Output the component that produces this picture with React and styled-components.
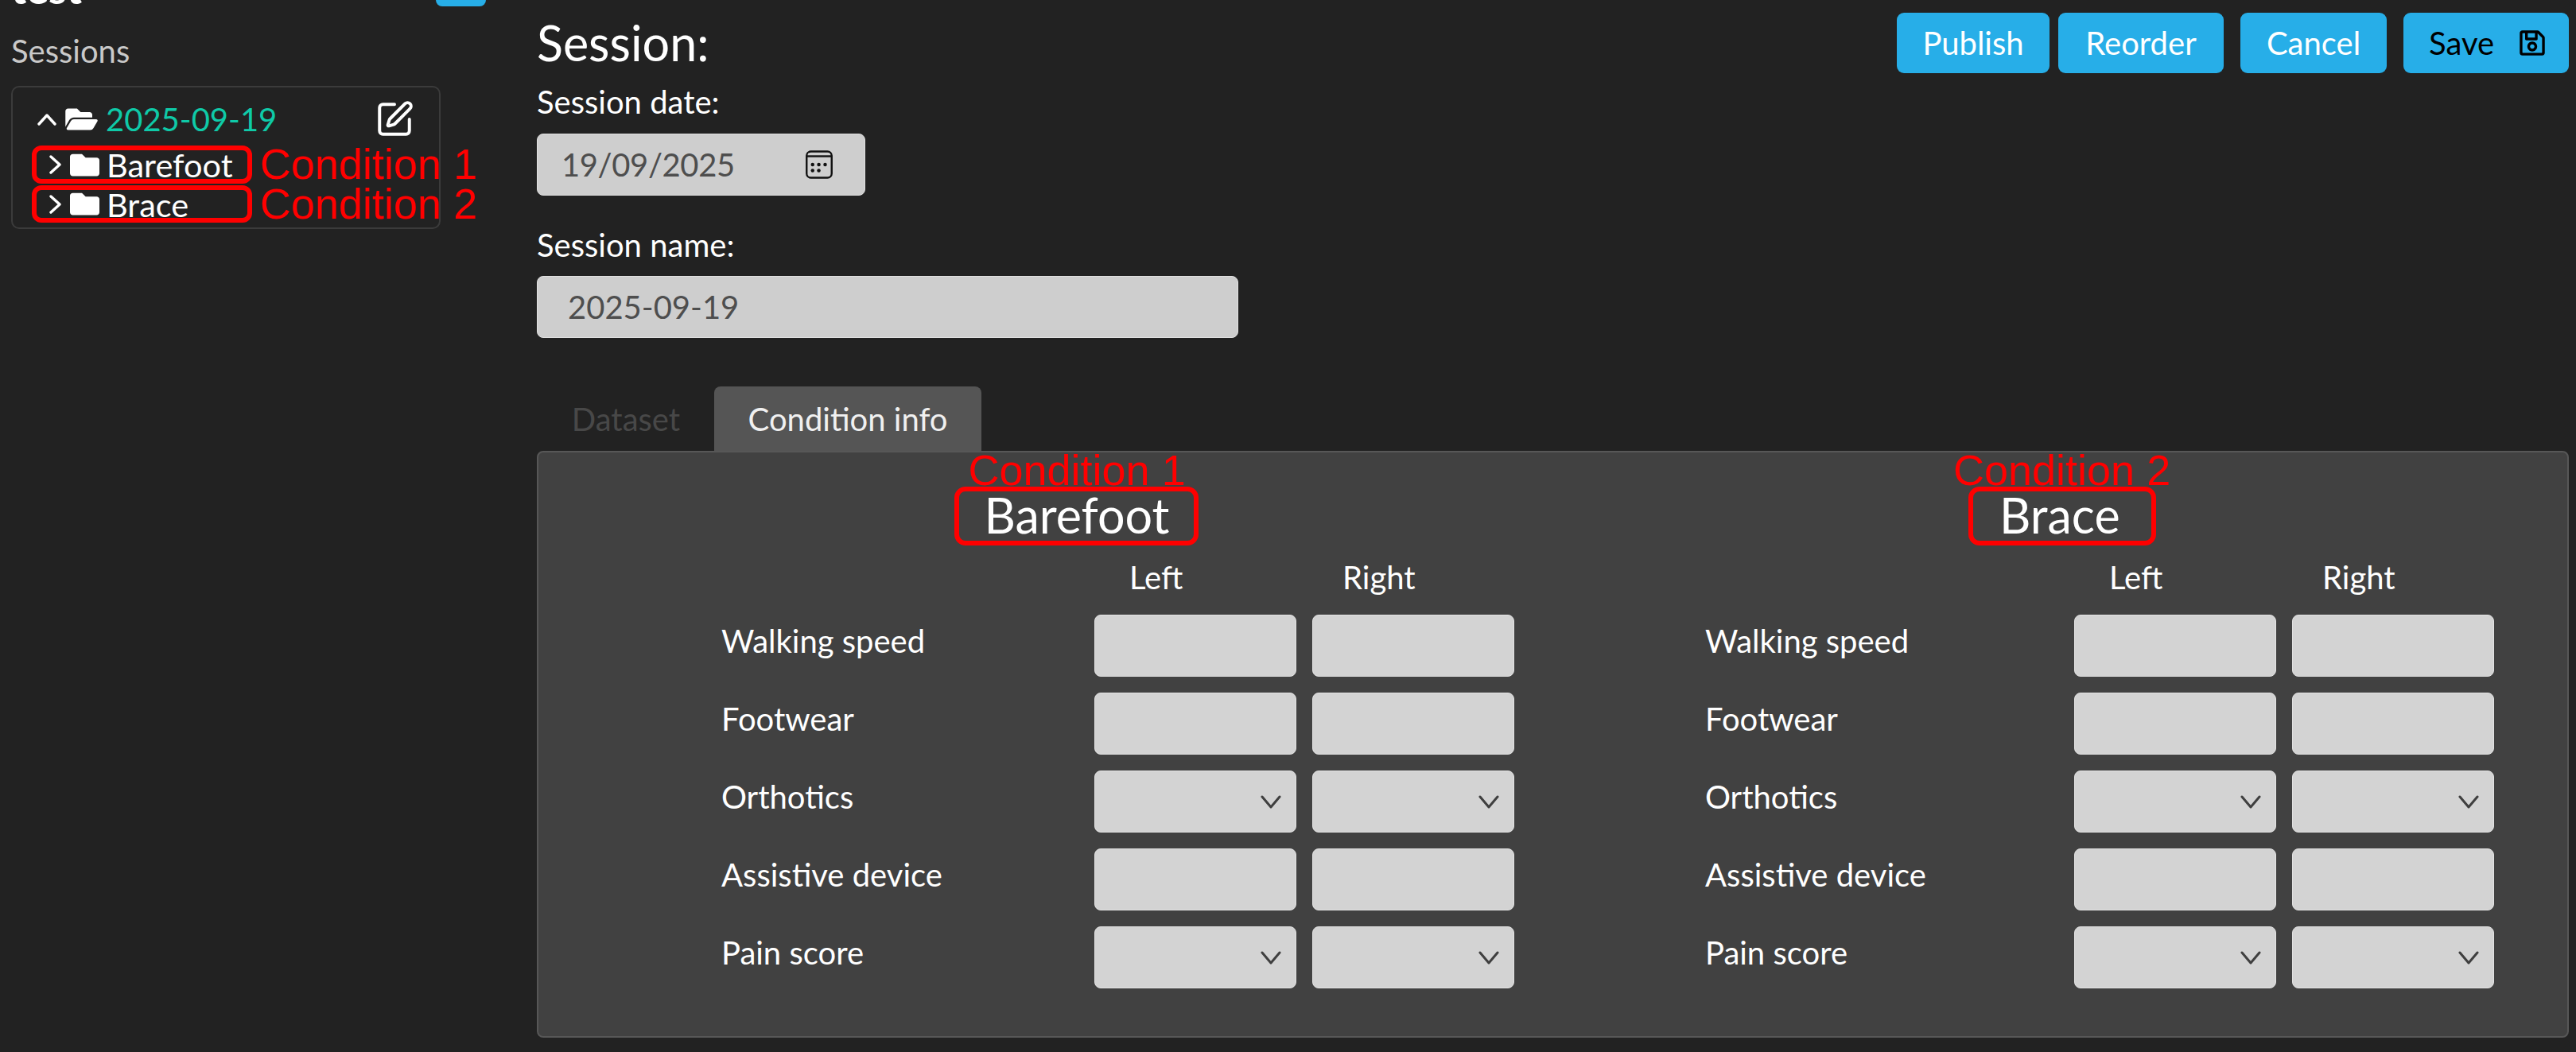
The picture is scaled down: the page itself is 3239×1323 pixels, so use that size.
import styled, { createGlobalStyle } from 'styled-components'
import { SquarePen } from 'lucide-react'
import { FaFolder, FaFolderOpen, FaRegSave } from 'react-icons/fa'

const GlobalStyle = createGlobalStyle`
html, body {
  margin: 0;
  padding: 0;
  height: 100%;
  background: #222222;
  overflow: hidden;
}
* { box-sizing: border-box; }
`

const Page = styled.div`
display: flex;
width: 3239px;
height: 1323px;
overflow: hidden;
background: #222222;
color: #ffffff;
font-family: Lato, "Open Sans", sans-serif;
font-size: 40px;
`

const Sidebar = styled.aside`
width: 675px;
flex-shrink: 0;
padding-left: 14px;
`

const SidebarTop = styled.div`
display: flex;
justify-content: space-between;
align-items: flex-end;
width: 597px;
height: 8px;
overflow: hidden;
`

const ProjectName = styled.div`
font-size: 52px;
font-weight: 700;
line-height: 40px;
height: 5px;
margin-bottom: 3px;
display: flex;
align-items: flex-end;
`

const SmallButton = styled.div`
width: 63px;
height: 40px;
background: #27aee8;
border-radius: 8px;
`

const SessionsTitle = styled.div`
margin-top: 32px;
line-height: 48px;
color: #c9c9c9;
`

const TreeBox = styled.div`
margin-top: 20px;
width: 540px;
height: 180px;
padding: 20px 0 0 24px;
border: 2px solid #3b3b3b;
border-radius: 10px;
`

const SessionRow = styled.div`
display: flex;
align-items: center;
height: 39px;
padding-left: 7px;
margin-bottom: 14px;
color: #0fcaa8;
svg { color: #ffffff; flex-shrink: 0; }
`

const FolderOpenIcon = styled(FaFolderOpen)`
width: 41px;
height: 36px;
margin: 0 10px 0 11px;
`

const EditIcon = styled(SquarePen)`
margin: -6px 0 -6px 123px;
`

const ConditionRow = styled.div`
position: relative;
display: flex;
align-items: center;
width: 277px;
height: ${props => props.$height}px;
margin-bottom: 2px;
padding-left: 16px;
border: 6px solid #ff0000;
border-radius: 12px;
font-size: 41.5px;
svg { flex-shrink: 0; }
`

const FolderIcon = styled(FaFolder)`
width: 37px;
height: 37px;
margin: 0 9px 0 10px;
`

const Note = styled.span`
position: absolute;
font-family: "Liberation Sans", Arial, sans-serif;
font-size: 54px;
line-height: 54px;
color: #ff0000;
white-space: nowrap;
`

const TreeNote = styled(Note)`
left: 281px;
top: -10px;
`

const Main = styled.main`
flex: 1;
min-width: 0;
padding-right: 9px;
`

const Header = styled.div`
display: flex;
justify-content: space-between;
align-items: center;
height: 76px;
margin-top: 16px;
`

const Heading = styled.h1`
margin: 0;
font-size: 61px;
font-weight: 400;
line-height: 76px;
`

const Actions = styled.div`
display: flex;
`

const ActionButton = styled.div`
display: flex;
align-items: center;
justify-content: ${props => (props.$dark ? 'flex-start' : 'center')};
width: ${props => props.$width}px;
height: 76px;
margin-left: ${props => props.$gap}px;
padding-left: ${props => (props.$dark ? 32 : 0)}px;
background: #27aee8;
border-radius: 9px;
color: ${props => (props.$dark ? '#000000' : '#ffffff')};
svg { margin-left: 30px; }
`

const FieldLabel = styled.div`
line-height: 48px;
margin-top: ${props => props.$top}px;
margin-bottom: ${props => props.$bottom}px;
`

const TextBox = styled.div`
display: flex;
align-items: center;
justify-content: space-between;
width: ${props => props.$width}px;
height: 78px;
padding: 0 39px 0 ${props => props.$pad}px;
background: #cecece;
border: 1px solid #e0e0e0;
border-radius: 8px;
color: #4e4e4e;
letter-spacing: ${props => props.$spacing || 0}px;
`

const Tabs = styled.div`
display: flex;
margin-top: 61px;
height: 81px;
padding-left: 1px;
`

const Tab = styled.div`
display: flex;
align-items: center;
justify-content: center;
width: ${props => props.$width}px;
border-radius: 8px 8px 0 0;
background: ${props => (props.$active ? '#555555' : 'transparent')};
color: ${props => (props.$active ? '#f0f0f0' : '#484848')};
`

const Panel = styled.div`
display: grid;
grid-template-columns: 1237px 1237px;
height: 738px;
padding: 43px 0 0 230px;
background: #414141;
border: 2px solid #575757;
border-radius: 8px;
`

const Block = styled.section`
width: 996px;
`

const TitleRow = styled.div`
display: flex;
justify-content: center;
width: ${props => props.$width}px;
`

const TitleBox = styled.div`
position: relative;
width: ${props => props.$width}px;
height: 74px;
padding-left: ${props => props.$pad}px;
border: 6px solid #ff0000;
border-radius: 14px;
font-size: 61px;
line-height: 60px;
white-space: nowrap;
`

const TitleNote = styled(Note)`
left: ${props => props.$left}px;
top: -54px;
`

const SidesRow = styled.div`
display: grid;
grid-template-columns: 268px 1fr;
margin: 16px 0 23px ${props => props.$offset}px;
line-height: 48px;
`

const Row = styled.div`
display: grid;
grid-template-columns: ${props => props.$label}px 254px 254px;
column-gap: 20px;
align-items: center;
height: 78px;
margin-bottom: 20px;
`

const RowLabel = styled.div`
margin: -12px -20px 0 0;
`

const Cell = styled.div`
display: flex;
align-items: center;
justify-content: flex-end;
height: 78px;
padding-right: 18px;
background: #d3d3d3;
border: 1px solid #e2e2e2;
border-radius: 8px;
`

const rows = [
  { label: 'Walking speed' },
  { label: 'Footwear' },
  { label: 'Orthotics', select: true },
  { label: 'Assistive device' },
  { label: 'Pain score', select: true },
]

const Chevron = ({ width, height, d, color = '#ffffff', stroke = 3.4 }) => (
  <svg width={width} height={height} viewBox={`0 0 ${width} ${height}`} fill="none" stroke={color} strokeWidth={stroke} strokeLinecap="round" strokeLinejoin="round">
    <path d={d} />
  </svg>
)

const CalendarIcon = () => (
  <svg width="36" height="36" viewBox="0 0 24 24" fill="none" stroke="#111" strokeWidth="1.6">
    <rect x="1.5" y="1" width="21" height="22" rx="3.5" />
    <path d="M1.5 5h21" />
    <g fill="#111" stroke="none">
      <circle cx="6.5" cy="12" r="1.5" />
      <circle cx="11.7" cy="12" r="1.5" />
      <circle cx="17" cy="12" r="1.5" />
      <circle cx="6.5" cy="17" r="1.5" />
      <circle cx="11.7" cy="17" r="1.5" />
    </g>
  </svg>
)

const SelectChevron = () => <Chevron width={26} height={17} d="M2 2L13 15L24 2" color="#3f3f3f" stroke={3} />

const Condition = ({ name, note, boxWidth, pad, noteLeft, rowWidth, labelWidth }) => (
  <Block>
    <TitleRow $width={rowWidth}>
      <TitleBox $width={boxWidth} $pad={pad}>
        <TitleNote $left={noteLeft}>{note}</TitleNote>
        {name}
      </TitleBox>
    </TitleRow>
    <SidesRow $offset={labelWidth + 44}>
      <div>Left</div>
      <div>Right</div>
    </SidesRow>
    {rows.map(row => (
      <Row key={row.label} $label={labelWidth - 20}>
        <RowLabel>{row.label}</RowLabel>
        <Cell>{row.select && <SelectChevron />}</Cell>
        <Cell>{row.select && <SelectChevron />}</Cell>
      </Row>
    ))}
  </Block>
)

const App = () => {
  return (
    <>
      <GlobalStyle />
      <Page>
        <Sidebar>
          <SidebarTop>
            <ProjectName>test</ProjectName>
            <SmallButton />
          </SidebarTop>
          <SessionsTitle>Sessions</SessionsTitle>
          <TreeBox>
            <SessionRow>
              <Chevron width={24} height={16} d="M2 14L12 3L22 14" />
              <FolderOpenIcon />
              2025-09-19
              <EditIcon size={50} strokeWidth={1.9} />
            </SessionRow>
            <ConditionRow $height={48}>
              <Chevron width={16} height={24} d="M2 2L13 12L2 22" />
              <FolderIcon />
              Barefoot
              <TreeNote>Condition 1</TreeNote>
            </ConditionRow>
            <ConditionRow $height={47}>
              <Chevron width={16} height={24} d="M2 2L13 12L2 22" />
              <FolderIcon />
              Brace
              <TreeNote>Condition 2</TreeNote>
            </ConditionRow>
          </TreeBox>
        </Sidebar>
        <Main>
          <Header>
            <Heading>Session:</Heading>
            <Actions>
              <ActionButton $width={192} $gap={0}>Publish</ActionButton>
              <ActionButton $width={208} $gap={11}>Reorder</ActionButton>
              <ActionButton $width={184} $gap={21}>Cancel</ActionButton>
              <ActionButton $width={208} $gap={21} $dark>
                Save
                <FaRegSave size={36} />
              </ActionButton>
            </Actions>
          </Header>
          <FieldLabel $top={12} $bottom={16}>Session date:</FieldLabel>
          <TextBox $width={413} $pad={30} $spacing={-0.4}>
            19/09/2025
            <CalendarIcon />
          </TextBox>
          <FieldLabel $top={38} $bottom={15}>Session name:</FieldLabel>
          <TextBox $width={882} $pad={38}>2025-09-19</TextBox>
          <Tabs>
            <Tab $width={222}>Dataset</Tab>
            <Tab $width={336} $active>Condition info</Tab>
          </Tabs>
          <Panel>
            <Condition name="Barefoot" note="Condition 1" boxWidth={307} pad={32} noteLeft={12} rowWidth={892} labelWidth={469} />
            <Condition name="Brace" note="Condition 2" boxWidth={236} pad={33} noteLeft={-25} rowWidth={898} labelWidth={464} />
          </Panel>
        </Main>
      </Page>
    </>
  )
}

export default App
